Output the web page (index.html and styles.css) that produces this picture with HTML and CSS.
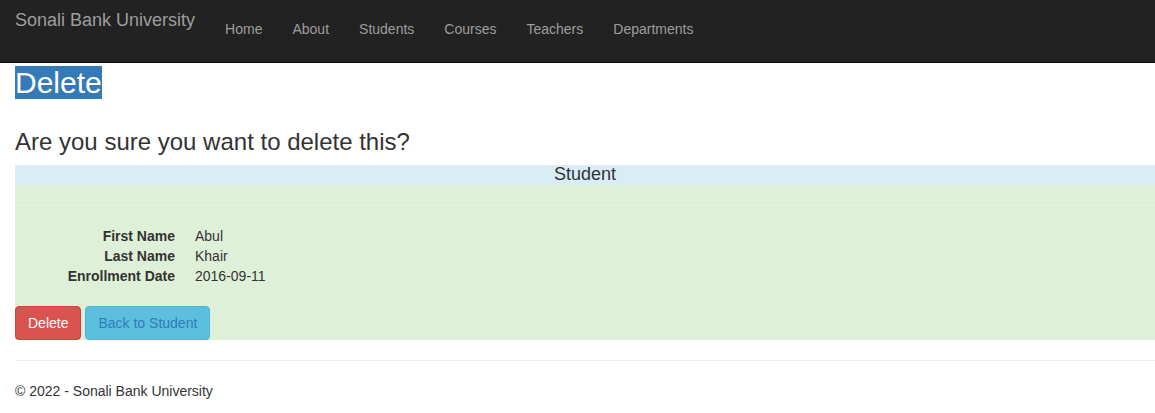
FILE: index.html
```html
<!DOCTYPE html>
<html lang="en">
<head>
<meta charset="utf-8">
<title>Delete - Sonali Bank University</title>
<link rel="stylesheet" href="styles.css">
</head>
<body>
<nav class="navbar">
  <a class="brand" href="#">Sonali Bank University</a>
  <ul class="nav">
    <li><a href="#">Home</a></li>
    <li><a href="#">About</a></li>
    <li><a href="#">Students</a></li>
    <li><a href="#">Courses</a></li>
    <li><a href="#">Teachers</a></li>
    <li><a href="#">Departments</a></li>
  </ul>
</nav>
<main class="body-content">
  <h2 class="title"><span class="bg-primary">Delete</span></h2>
  <h3 class="question">Are you sure you want to delete this?</h3>
  <div class="panel">
    <div class="panel-head">Student</div>
    <div class="panel-gap"></div>
    <div class="panel-body">
      <dl class="dl-horizontal">
        <dt>First Name</dt><dd>Abul</dd>
        <dt>Last Name</dt><dd>Khair</dd>
        <dt>Enrollment Date</dt><dd>2016-09-11</dd>
      </dl>
      <div class="actions">
        <button class="btn btn-danger" type="button">Delete</button>
        <a class="btn btn-info" href="#">Back to Student</a>
      </div>
    </div>
  </div>
  <hr class="rule">
  <footer class="footer">
    <p>&copy; 2022 - Sonali Bank University</p>
  </footer>
</main>
</body>
</html>
```

FILE: styles.css
```css
* { box-sizing: border-box; }
html, body { margin: 0; padding: 0; }
body {
  font-family: "Liberation Sans", Arial, Helvetica, sans-serif;
  font-size: 14px;
  line-height: 20px;
  color: #333;
  background: #fff;
}
a { text-decoration: none; }

.navbar {
  display: flex;
  align-items: flex-start;
  height: 63px;
  background: #222;
  border-bottom: 1px solid #080808;
}
.brand {
  display: block;
  padding: 10px 15px 0 15px;
  font-size: 18px;
  line-height: 20px;
  color: #9d9d9d;
}
.nav {
  display: flex;
  list-style: none;
  margin: 0;
  padding: 0;
}
.nav a {
  display: block;
  padding: 19px 15px 0 15px;
  line-height: 20px;
  color: #9d9d9d;
}

.body-content {
  padding-left: 15px;
}
.title {
  margin: 3px 0 10px 0;
  font-size: 30px;
  font-weight: 500;
  line-height: 33px;
}
.bg-primary {
  background: #337ab7;
  color: #fff;
}
.question {
  margin: 30px 0 10px 0;
  font-size: 24px;
  font-weight: 500;
  line-height: 26px;
  color: #333;
}

.panel {
  background: #dff0d8;
}
.panel-head {
  height: 20px;
  background: #d9edf7;
  text-align: center;
  font-size: 18px;
  line-height: 18px;
  padding-top: 0;
}
.panel-gap {
  height: 21px;
  border-bottom: 1px solid #e6f3e1;
}
.dl-horizontal {
  display: grid;
  grid-template-columns: 160px 1fr;
  column-gap: 20px;
  margin: 20px 0 20px 0;
}
.dl-horizontal dt {
  font-weight: bold;
  text-align: right;
}
.dl-horizontal dd {
  margin: 0;
}
.actions {
  display: flex;
  gap: 4px;
}
.btn {
  display: inline-block;
  height: 34px;
  padding: 6px 12px;
  font-family: inherit;
  font-size: 14px;
  line-height: 20px;
  border: 1px solid transparent;
  border-radius: 4px;
  cursor: pointer;
}
.btn-danger {
  background: #d9534f;
  border-color: #d43f3a;
  color: #fff;
}
.btn-info {
  background: #5bc0de;
  border-color: #46b8da;
  color: #337ab7;
}

.rule {
  margin: 20px 0 20px 0;
  border: 0;
  border-top: 1px solid #eee;
}
.footer p {
  margin: 0;
  line-height: 20px;
}
```
